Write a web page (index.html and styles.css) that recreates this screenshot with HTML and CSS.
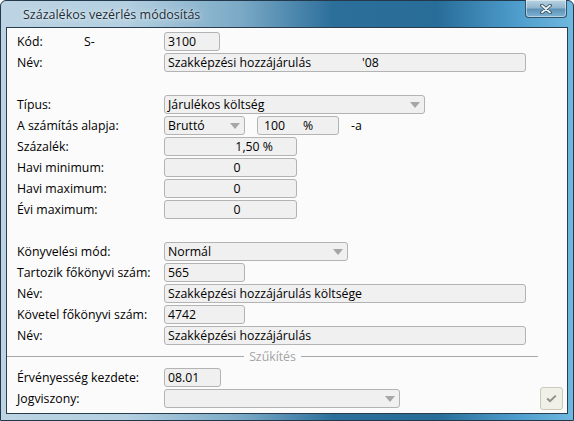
FILE: index.html
```html
<!DOCTYPE html>
<html lang="hu">
<head>
<meta charset="utf-8">
<title>Százalékos vezérlés módosítás</title>
<link rel="stylesheet" href="styles.css">
</head>
<body>
<div class="window">
  <div class="titlebar">
    <span class="title">Százalékos vezérlés módosítás</span>
    <div class="close">
      <svg width="12" height="10" viewBox="0 0 12 10">
        <path d="M2 1.5 L10 8.5 M10 1.5 L2 8.5" stroke="#2f4a5c" stroke-width="3.6" stroke-linecap="round"/>
        <path d="M2 1.5 L10 8.5 M10 1.5 L2 8.5" stroke="#eef3f6" stroke-width="1.8" stroke-linecap="round"/>
      </svg>
    </div>
  </div>
  <div class="client">
    <div class="form">
      <div class="label"><span class="code-label">Kód:</span><span>S-</span></div>
      <div class="field"><div class="box w56">3100</div></div>

      <div class="label">Név:</div>
      <div class="field"><div class="box w362"><span class="name-main">Szakképzési hozzájárulás</span>'08</div></div>

      <div class="spacer"></div>

      <div class="label">Típus:</div>
      <div class="field"><div class="box select w261"><span>Járulékos költség</span><span class="arrow"></span></div></div>

      <div class="label">A számítás alapja:</div>
      <div class="field gap12">
        <div class="box select w81"><span>Bruttó</span><span class="arrow"></span></div>
        <div class="box w82 pct"><span>100</span><span>%</span></div>
        <span>-a</span>
      </div>

      <div class="label">Százalék:</div>
      <div class="field"><div class="box w133 num-right">1,50 %</div></div>

      <div class="label">Havi minimum:</div>
      <div class="field"><div class="box w133 num">0</div></div>

      <div class="label">Havi maximum:</div>
      <div class="field"><div class="box w133 num">0</div></div>

      <div class="label">Évi maximum:</div>
      <div class="field"><div class="box w133 num">0</div></div>

      <div class="spacer"></div>

      <div class="label">Könyvelési mód:</div>
      <div class="field"><div class="box select w184"><span>Normál</span><span class="arrow"></span></div></div>

      <div class="label">Tartozik főkönyvi szám:</div>
      <div class="field"><div class="box w81">565</div></div>

      <div class="label">Név:</div>
      <div class="field"><div class="box w362">Szakképzési hozzájárulás költsége</div></div>

      <div class="label">Követel főkönyvi szám:</div>
      <div class="field"><div class="box w81">4742</div></div>

      <div class="label">Név:</div>
      <div class="field"><div class="box w362">Szakképzési hozzájárulás</div></div>

      <div class="separator"><span class="line"></span><span class="sep-text">Szűkítés</span><span class="line"></span></div>

      <div class="label">Érvényesség kezdete:</div>
      <div class="field"><div class="box w57">08.01</div></div>

      <div class="label">Jogviszony:</div>
      <div class="field">
        <div class="box select w236"><span></span><span class="arrow"></span></div>
        <div class="ok">
          <svg width="11" height="9" viewBox="0 0 11 9">
            <path d="M1.2 4.6 L4 7.2 L9.8 1.6" fill="none" stroke="#8e8e8e" stroke-width="2"/>
          </svg>
        </div>
      </div>
    </div>
  </div>
</div>
</body>
</html>
```

FILE: styles.css
```css
html, body {
  margin: 0;
  padding: 0;
  width: 574px;
  height: 421px;
  overflow: hidden;
  background: #ffffff;
}

.window {
  box-sizing: border-box;
  width: 574px;
  height: 421px;
  display: flex;
  flex-direction: column;
  padding: 0 5px 6px 5px;
  border: 1px solid #23384a;
  border-radius: 6px 6px 0 0;
  background:
    linear-gradient(to right, #bcd4e3 0%, #b3cfe0 22%, #7aa9c6 42%, #2c6f9b 58%, #286c98 76%, #4d9ccb 90%, #6fb8df 100%);
  font-family: "Open Sans", "Noto Sans", sans-serif;
  font-size: 12.3px;
  color: #000;
}

.titlebar {
  height: 26px;
  flex: none;
  display: flex;
  align-items: flex-start;
  justify-content: space-between;
}

.title {
  margin: 5px 0 0 17px;
  font-size: 12.5px;
  color: #1b2c38;
  text-shadow: 0 0 6px rgba(255, 255, 255, 0.8), 0 0 2px rgba(255, 255, 255, 0.6);
}

.close {
  box-sizing: border-box;
  width: 42px;
  height: 18px;
  margin: -1px 1px 0 0;
  border: 1px solid #34526a;
  border-top: none;
  border-radius: 0 0 4px 4px;
  background: linear-gradient(to bottom, #b9d2e2 0%, #93b7cf 45%, #5f93b6 55%, #7db3d4 100%);
  box-shadow: inset 0 0 0 1px rgba(255, 255, 255, 0.45);
  display: flex;
  align-items: center;
  justify-content: center;
}

.client {
  flex: 1;
  position: relative;
  background: #fbfbfb;
  border: 1px solid #2a3d4e;
  padding-top: 4px;
}

.form {
  display: grid;
  grid-template-columns: 147px 1fr;
  grid-auto-rows: 19px;
  row-gap: 2px;
  padding-left: 10px;
}

.label {
  display: flex;
  align-items: center;
  white-space: nowrap;
}

.code-label {
  width: 67px;
}

.field {
  display: flex;
  align-items: center;
}

.gap12 {
  gap: 12px;
}

.spacer {
  grid-column: 1 / -1;
}

.box {
  box-sizing: border-box;
  height: 19px;
  border: 1px solid #b3b3b3;
  border-radius: 3px;
  background: #f0f0f0;
  padding: 0 3px;
  display: flex;
  align-items: center;
  white-space: nowrap;
  overflow: hidden;
}

.w56 { width: 56px; }
.w57 { width: 57px; }
.w81 { width: 81px; }
.w82 { width: 82px; }
.w133 { width: 133px; }
.w184 { width: 184px; }
.w236 { width: 236px; }
.w261 { width: 261px; }
.w362 { width: 362px; }

.name-main {
  display: inline-block;
  width: 194px;
}

.select {
  justify-content: space-between;
  padding-right: 4px;
}

.arrow {
  width: 0;
  height: 0;
  border-left: 5px solid transparent;
  border-right: 5px solid transparent;
  border-top: 6px solid #a6a6a6;
}

.pct {
  padding-left: 6px;
  gap: 18px;
}

.num-right {
  justify-content: flex-end;
  padding-right: 23px;
}

.num {
  justify-content: center;
  padding-left: 16px;
}

.separator {
  grid-column: 1 / -1;
  margin: 0 29px 0 -10px;
  display: flex;
  align-items: center;
  gap: 5px;
}

.line {
  flex: 1;
  height: 1px;
  background: #a8a8a8;
}

.sep-text {
  color: #a3a3a3;
}

.ok {
  box-sizing: border-box;
  width: 23px;
  height: 23px;
  margin: -2px 4px -2px auto;
  border: 1px solid #cbc9bb;
  border-radius: 3px;
  background: #f1f0e8;
  display: flex;
  align-items: center;
  justify-content: center;
}
```
